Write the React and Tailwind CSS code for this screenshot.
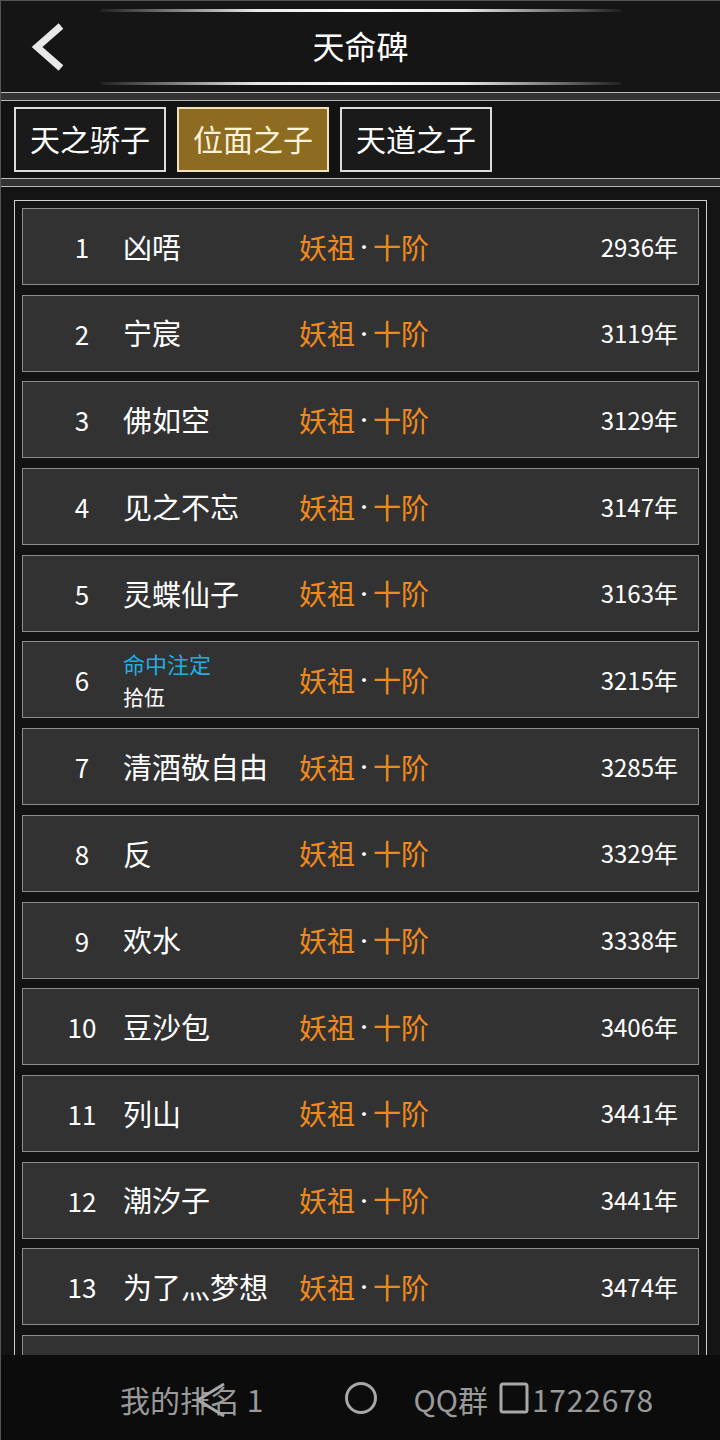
const rows = [
  { n: 1, name: "凶唔", y: "2936" },
  { n: 2, name: "宁宸", y: "3119" },
  { n: 3, name: "佛如空", y: "3129" },
  { n: 4, name: "见之不忘", y: "3147" },
  { n: 5, name: "灵蝶仙子", y: "3163" },
  { n: 6, name: "拾伍", title: "命中注定", y: "3215" },
  { n: 7, name: "清酒敬自由", y: "3285" },
  { n: 8, name: "反", y: "3329" },
  { n: 9, name: "欢水", y: "3338" },
  { n: 10, name: "豆沙包", y: "3406" },
  { n: 11, name: "列山", y: "3441" },
  { n: 12, name: "潮汐子", y: "3441" },
  { n: 13, name: "为了灬梦想", y: "3474" },
  { n: 14, name: "", y: "" },
];

const tabs = ["天之骄子", "位面之子", "天道之子"];

function GlowLine() {
  return (
    <div className="mx-auto h-[3px] w-[520px] bg-[linear-gradient(90deg,rgba(255,255,255,0.05),rgba(255,255,255,0.9)_30%,#fff_50%,rgba(255,255,255,0.9)_70%,rgba(255,255,255,0.05))]" />
  );
}

function Row({ r }) {
  return (
    <div className="flex h-[77px] shrink-0 items-center border border-[#8c8c8c] bg-[#323232]">
      <div className="w-[100px] pl-[18px] text-center text-[26px] text-white">{r.y ? r.n : ""}</div>
      <div className="w-[176px]">
        {r.title ? (
          <div className="flex flex-col leading-[33px]">
            <span className="text-[22px] text-[#22aee0]">{r.title}</span>
            <span className="text-[21px] text-white">{r.name}</span>
          </div>
        ) : (
          <span className="whitespace-nowrap text-[29px] text-white">{r.name}</span>
        )}
      </div>
      {r.y && (
        <div className="flex items-center text-[28px] text-[#f08a1c]">
          <span>妖祖</span>
          <span className="w-[18px] text-center text-[18px] text-white">·</span>
          <span>十阶</span>
        </div>
      )}
      <div className="ml-auto pr-[20px] text-[24px] text-white">{r.y && r.y + "年"}</div>
    </div>
  );
}

export default function App() {
  return (
    <div
      className="relative h-[1440px] w-[720px] overflow-hidden border-l border-[#555] bg-[#141414]"
      style={{ fontFamily: '"Noto Sans CJK SC", "Noto Sans", sans-serif' }}
    >
      {/* header */}
      <div className="flex h-[92px] flex-col border-t border-[#555] bg-[#151515] pt-[8px]">
        <GlowLine />
        <div className="relative flex flex-1 items-center justify-center pb-[5px]">
          <svg className="absolute left-[28px] top-[10px]" width="38" height="50" viewBox="0 0 38 50">
            <path d="M32 4 L8 25 L32 46" fill="none" stroke="#e8e8e8" strokeWidth="7" strokeLinecap="butt" />
          </svg>
          <span className="text-[32px] text-white">天命碑</span>
        </div>
        <GlowLine />
        <div className="h-[7px]" />
      </div>

      <div className="h-[9px] border-y border-[#bbb] bg-[#333]" />

      {/* tabs */}
      <div className="flex h-[77px] items-start gap-[11px] bg-[#131313] px-[13px] pt-[6px]">
        {tabs.map((t, i) => (
          <div
            key={t}
            className={
              i === 1
                ? "flex h-[65px] w-[152px] items-center justify-center border-2 border-[#efe2bd] bg-[#8d6b20] pb-[2px] text-[30px] text-[#fbf3dc]"
                : "flex h-[65px] w-[152px] items-center justify-center border-2 border-[#dcdcdc] bg-[#1a1a1a] pb-[2px] text-[30px] text-white"
            }
          >
            {t}
          </div>
        ))}
      </div>

      <div className="h-[9px] border-y border-[#bbb] bg-[#333]" />

      {/* list */}
      <div className="px-[13px] pt-[13px]">
        <div className="flex flex-col gap-[9.7px] border border-[#cfcfcf] bg-[#131313] px-[7px] pt-[7px]">
          {rows.map((r) => (
            <Row key={r.n} r={r} />
          ))}
        </div>
      </div>

      {/* footer */}
      <div className="absolute bottom-0 left-0 flex h-[85px] w-full items-center bg-[#0c0c0c] pt-[3px] text-[30px] text-[#9a9a9a]">
        <span className="ml-[119px]">我的排名 1</span>
        <span className="ml-[150px]">QQ群</span>
        <span className="ml-[44px] tracking-[0.8px]">1722678</span>
        <svg className="absolute left-[193px] top-[27px]" width="34" height="36" viewBox="0 0 34 36">
          <path d="M30 2 L4 18 L30 34" fill="none" stroke="#a8a8a8" strokeWidth="3" strokeLinejoin="round" />
        </svg>
        <svg className="absolute left-[343px] top-[26px]" width="34" height="34" viewBox="0 0 34 34">
          <circle cx="17" cy="17" r="14.5" fill="none" stroke="#a8a8a8" strokeWidth="3" />
        </svg>
        <svg className="absolute left-[498px] top-[27px]" width="30" height="32" viewBox="0 0 30 32">
          <rect x="2" y="2" width="26" height="28" rx="2" fill="#0c0c0c" stroke="#a8a8a8" strokeWidth="3" />
        </svg>
      </div>
    </div>
  );
}
